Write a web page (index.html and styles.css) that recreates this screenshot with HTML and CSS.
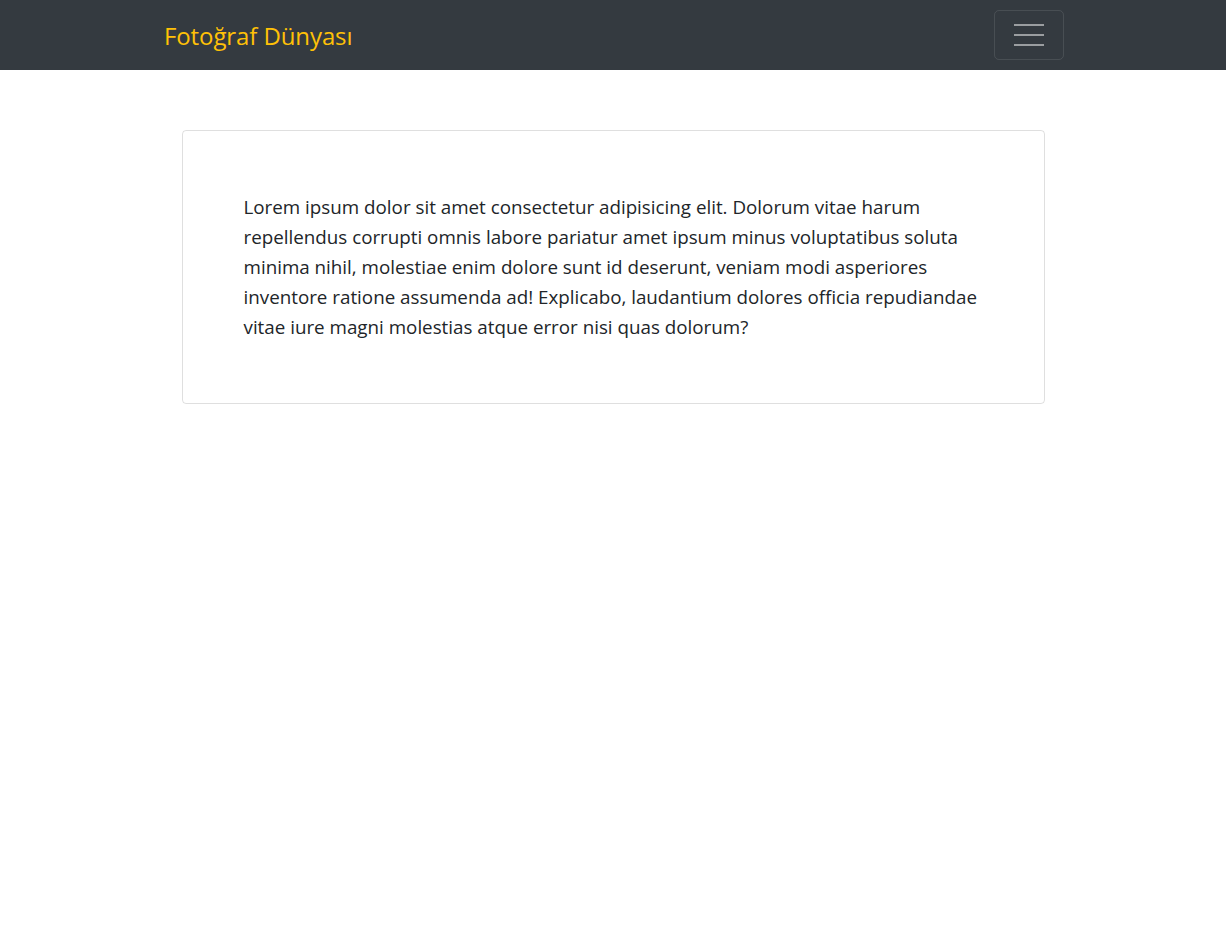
FILE: index.html
```html
<!DOCTYPE html>
<html lang="tr">
<head>
<meta charset="utf-8">
<title>Fotoğraf Dünyası</title>
<link rel="stylesheet" href="styles.css">
</head>
<body>
<nav class="navbar">
  <div class="nav-inner">
    <a class="brand" href="#">Fotoğraf Dünyası</a>
    <button class="toggler" type="button" aria-label="Menü">
      <svg width="30" height="22" viewBox="0 0 30 22" aria-hidden="true">
        <path d="M0 1h30M0 11h30M0 21h30" stroke="rgba(255,255,255,0.5)" stroke-width="2"/>
      </svg>
    </button>
  </div>
</nav>
<main class="main">
  <div class="card">
    <p class="lead">Lorem ipsum dolor sit amet consectetur adipisicing elit. Dolorum vitae harum repellendus corrupti omnis labore pariatur amet ipsum minus voluptatibus soluta minima nihil, molestiae enim dolore sunt id deserunt, veniam modi asperiores inventore ratione assumenda ad! Explicabo, laudantium dolores officia repudiandae vitae iure magni molestias atque error nisi quas dolorum?</p>
  </div>
</main>
</body>
</html>
```

FILE: styles.css
```css
* { box-sizing: border-box; }
html, body { margin: 0; padding: 0; }
body {
  font-family: "Open Sans", "Noto Sans", sans-serif;
  color: #212529;
  background: #fff;
}
.navbar {
  background: #343a40;
  height: 70px;
}
.nav-inner {
  width: 900px;
  margin-left: calc(50% - 449px);
  height: 70px;
  display: flex;
  align-items: center;
  justify-content: space-between;
}
.brand {
  color: #ffc107;
  text-decoration: none;
  font-size: 24px;
  line-height: 1;
  padding-top: 1px;
  letter-spacing: -0.1px;
}
.toggler {
  width: 70px;
  height: 50px;
  margin-top: -1px;
  background: transparent;
  border: 1px solid rgba(255,255,255,0.1);
  border-radius: 5px;
  display: flex;
  align-items: center;
  justify-content: center;
  padding: 0;
  cursor: pointer;
}
.toggler svg { display: block; }
.main {
  padding-top: 60px;
}
.card {
  width: 863px;
  margin: 0 auto;
  border: 1px solid rgba(0,0,0,0.125);
  border-radius: 4px;
  padding: 61px;
}
.lead {
  margin: 0;
  font-size: 18.8px;
  line-height: 30px;
}
```
